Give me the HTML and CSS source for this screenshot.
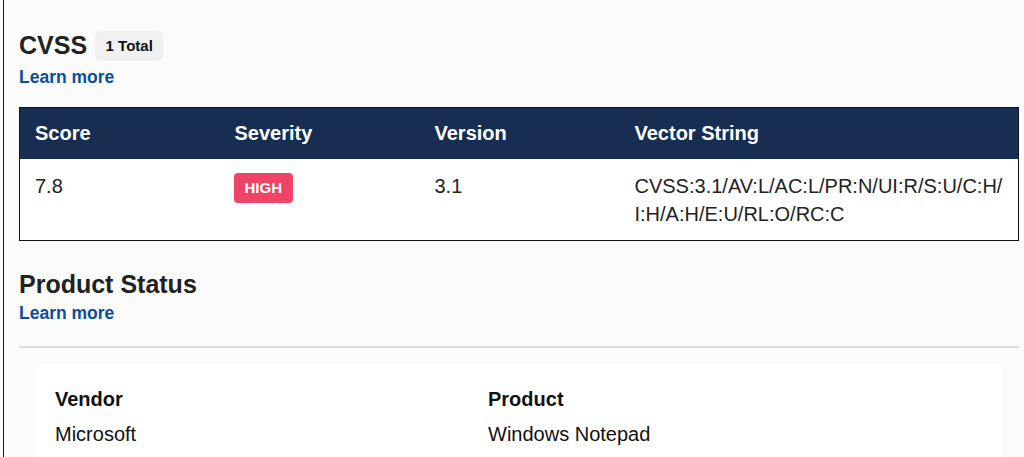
FILE: index.html
```html
<!DOCTYPE html>
<html lang="en">
<head>
<meta charset="utf-8">
<title>CVSS</title>
<link rel="stylesheet" href="styles.css">
</head>
<body>
<div class="page">
  <div class="content">
    <section class="section">
      <div class="title-row">
        <h2 class="title">CVSS</h2>
        <span class="count">1 Total</span>
      </div>
      <a class="learn" href="#">Learn more</a>
      <table class="cvss">
        <thead>
          <tr>
            <th class="col">Score</th>
            <th class="col">Severity</th>
            <th class="col">Version</th>
            <th>Vector String</th>
          </tr>
        </thead>
        <tbody>
          <tr>
            <td>7.8</td>
            <td><span class="sev">HIGH</span></td>
            <td>3.1</td>
            <td class="vector">CVSS:3.1/AV:L/AC:L/PR:N/UI:R/S:U/C:H/<wbr>I:H/A:H/E:U/RL:O/RC:C</td>
          </tr>
        </tbody>
      </table>
    </section>
    <section class="section ps">
      <h2 class="title">Product Status</h2>
      <a class="learn learn-ps" href="#">Learn more</a>
      <hr class="rule">
      <div class="card">
        <div class="field">
          <div class="label">Vendor</div>
          <div class="value">Microsoft</div>
        </div>
        <div class="field">
          <div class="label">Product</div>
          <div class="value">Windows Notepad</div>
        </div>
      </div>
    </section>
  </div>
</div>
</body>
</html>
```
FILE: styles.css
```css
html, body {
  margin: 0;
  padding: 0;
  background: #fbfbfb;
}
body {
  font-family: "Liberation Sans", Arial, sans-serif;
  color: #222;
  height: 457px;
  overflow: hidden;
}
.page {
  margin-left: 3px;
  border-left: 1px solid #1a1a1a;
  min-height: 457px;
  padding-left: 15px;
}
.content {
  width: 1000px;
  padding-top: 29px;
}
.title-row {
  display: flex;
  align-items: center;
  gap: 8px;
}
.title {
  margin: 0;
  font-size: 25px;
  line-height: 32px;
  font-weight: bold;
  color: #222;
}
.count {
  display: inline-block;
  background: #f0f0f0;
  border-radius: 6px;
  font-size: 15px;
  font-weight: bold;
  color: #111;
  line-height: 30px;
  padding: 0 10.5px;
  margin-top: 2px;
}
.learn {
  display: block;
  margin-top: 6px;
  font-size: 17.5px;
  line-height: 20px;
  font-weight: bold;
  color: #0b4e9b;
  text-decoration: none;
  width: max-content;
}
.cvss {
  margin-top: 20px;
  width: 1000px;
  border-collapse: collapse;
  table-layout: fixed;
  border: 1px solid #111;
  background: #fff;
}
.cvss th {
  background: #172e52;
  color: #fff;
  font-size: 20px;
  font-weight: bold;
  text-align: left;
  height: 51px;
  padding: 0 2px 0 15px;
}
.cvss th.col {
  width: 200px;
  box-sizing: border-box;
}
.cvss td {
  font-size: 20px;
  line-height: 28px;
  color: #222;
  padding: 13px 2px 12px 15px;
  vertical-align: top;
}
.sev {
  display: inline-block;
  background: #ef4468;
  color: #fff;
  font-size: 15px;
  font-weight: bold;
  line-height: 30px;
  padding: 0 11px;
  border-radius: 4px;
  margin-left: -1px;
}
.ps {
  margin-top: 27px;
}
.learn-ps {
  margin-top: 3px;
}
.rule {
  margin: 23px 0 0;
  border: 0;
  height: 2px;
  background: #dcdcdc;
}
.card {
  margin: 15px 16px 0;
  background: #fff;
  box-shadow: 0 0 2px rgba(0,0,0,0.08);
  padding: 25px 20px 20px;
  display: grid;
  grid-template-columns: 433px 1fr;
  border-radius: 2px;
}
.label {
  font-size: 20px;
  line-height: 22px;
  font-weight: bold;
  color: #111;
}
.value {
  margin-top: 13px;
  font-size: 20px;
  line-height: 22px;
  color: #111;
}
```
